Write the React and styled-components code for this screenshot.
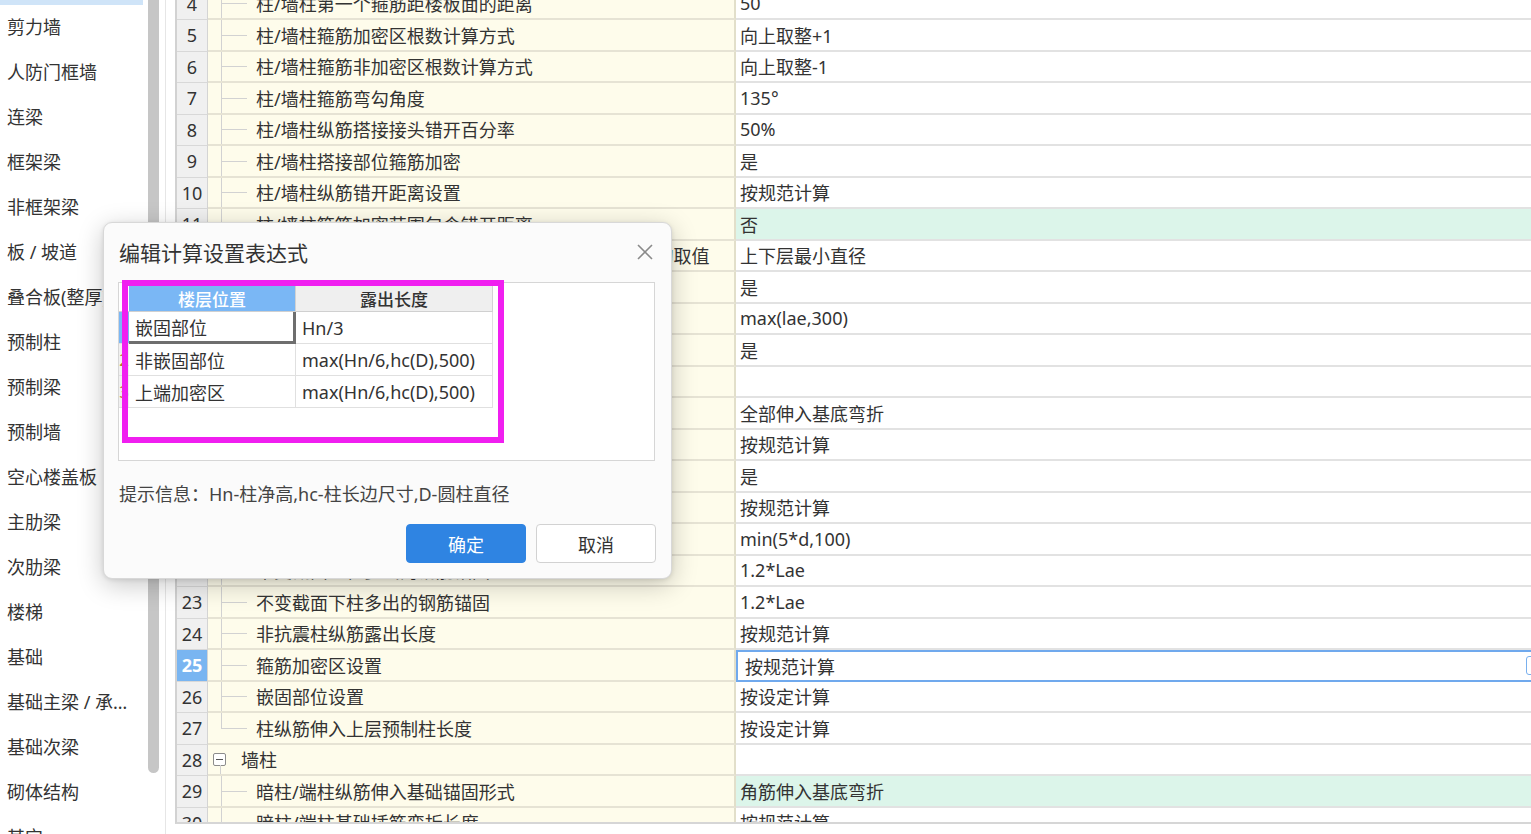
import React from "react";
import styled, { createGlobalStyle } from "styled-components";

const GlobalStyle = createGlobalStyle`
  html, body {
    margin: 0;
    padding: 0;
    background: #fff;
    overflow: hidden;
  }
  body {
    font-family: "Noto Sans", "Noto Sans CJK SC", sans-serif;
    color: #333;
  }
  * {
    box-sizing: border-box;
  }
`;

const navItems = [
  "柱",
  "剪力墙",
  "人防门框墙",
  "连梁",
  "框架梁",
  "非框架梁",
  "板 / 坡道",
  "叠合板(整厚)",
  "预制柱",
  "预制梁",
  "预制墙",
  "空心楼盖板",
  "主肋梁",
  "次肋梁",
  "楼梯",
  "基础",
  "基础主梁 / 承台梁",
  "基础次梁",
  "砌体结构",
  "其它",
];

// kind: child | last | group
const rows = [
  { n: 4, name: "柱/墙柱第一个箍筋距楼板面的距离", value: "50" },
  { n: 5, name: "柱/墙柱箍筋加密区根数计算方式", value: "向上取整+1" },
  { n: 6, name: "柱/墙柱箍筋非加密区根数计算方式", value: "向上取整-1" },
  { n: 7, name: "柱/墙柱箍筋弯勾角度", value: "135°" },
  { n: 8, name: "柱/墙柱纵筋搭接接头错开百分率", value: "50%" },
  { n: 9, name: "柱/墙柱搭接部位箍筋加密", value: "是" },
  { n: 10, name: "柱/墙柱纵筋错开距离设置", value: "按规范计算" },
  { n: 11, name: "柱/墙柱箍筋加密范围包含错开距离", value: "否", green: true },
  { n: 12, name: "绑扎搭接范围内的箍筋间距min(5d,100)中，纵筋d的取值", value: "上下层最小直径" },
  { n: 13, name: "柱/墙柱螺旋箍筋是否连续通过", value: "是" },
  { n: 14, name: "柱/墙柱圆形箍筋的搭接长度", value: "max(lae,300)" },
  { n: 15, name: "层间变截面钢筋自动判断", value: "是" },
  { n: 16, name: "柱/墙柱纵筋伸入基础弯折长度", value: "" },
  { n: 17, name: "柱纵筋伸入基础锚固形式", value: "全部伸入基底弯折" },
  { n: 18, name: "柱基础插筋弯折长度", value: "按规范计算" },
  { n: 19, name: "柱基础锚固区只计算外侧箍筋", value: "是" },
  { n: 20, name: "抗震柱纵筋露出长度", value: "按规范计算" },
  { n: 21, name: "纵筋搭接范围箍筋间距", value: "min(5*d,100)" },
  { n: 22, name: "不变截面上柱多出的钢筋锚固", value: "1.2*Lae" },
  { n: 23, name: "不变截面下柱多出的钢筋锚固", value: "1.2*Lae" },
  { n: 24, name: "非抗震柱纵筋露出长度", value: "按规范计算" },
  { n: 25, name: "箍筋加密区设置", value: "按规范计算", selected: true },
  { n: 26, name: "嵌固部位设置", value: "按设定计算" },
  { n: 27, name: "柱纵筋伸入上层预制柱长度", value: "按设定计算", kind: "last" },
  { n: 28, name: "墙柱", value: "", kind: "group" },
  { n: 29, name: "暗柱/端柱纵筋伸入基础锚固形式", value: "角筋伸入基底弯折", green: true },
  { n: 30, name: "暗柱/端柱基础插筋弯折长度", value: "按规范计算" },
];

const exprRows = [
  { n: 1, pos: "嵌固部位", len: "Hn/3", active: true },
  { n: 2, pos: "非嵌固部位", len: "max(Hn/6,hc(D),500)" },
  { n: 3, pos: "上端加密区", len: "max(Hn/6,hc(D),500)" },
];

const Page = styled.div`
  position: relative;
  display: flex;
  width: 1531px;
  height: 834px;
  overflow: hidden;
  background: #fff;
`;

/* ---------- left category list ---------- */

const Sidebar = styled.aside`
  display: flex;
  flex-shrink: 0;
  width: 166px;
  height: 100%;
  border-right: 1px solid #e6e6e6;
`;

const NavList = styled.ul`
  list-style: none;
  margin: -40px 0 0;
  padding: 0;
  width: 143px;
`;

const NavItem = styled.li`
  height: 45px;
  line-height: 45px;
  padding: 0 6px 0 7px;
  font-size: 18px;
  color: #333;
  white-space: nowrap;
  overflow: hidden;
  text-overflow: ellipsis;
  background: ${(p) => (p.$active ? "#cfe4f8" : "transparent")};
`;

const ScrollTrack = styled.div`
  flex: 1;
  padding-left: 5px;
`;

const ScrollThumb = styled.div`
  width: 11px;
  height: 783px;
  margin-top: -10px;
  border-radius: 6px;
  background: #c6c6c6;
`;

/* ---------- settings table ---------- */

const Main = styled.main`
  flex: 1;
  padding-left: 9px;
  min-width: 0;
`;

const TableFrame = styled.div`
  height: 824px;
  border-left: 2px solid #d2d2d2;
  border-bottom: 2px solid #d6d6d6;
  overflow: hidden;
`;

const TableBody = styled.div`
  margin-top: -11.5px;
`;

const Row = styled.div`
  display: grid;
  grid-template-columns: 31px 528px 820px;
  height: 31.5px;
`;

const NumCell = styled.div`
  display: flex;
  align-items: center;
  justify-content: center;
  font-size: 18px;
  background: ${(p) => (p.$selected ? "#79b5f1" : "#f0f0f0")};
  color: ${(p) => (p.$selected ? "#fff" : "#333")};
  font-weight: ${(p) => (p.$selected ? 700 : 400)};
  border-right: 1.5px solid #d4d4d4;
  border-bottom: 1.5px solid #d8d8d8;
`;

const TreeCell = styled.div`
  position: relative;
  display: flex;
  align-items: center;
  padding-left: ${(p) => (p.$group ? "5px" : "48px")};
  font-size: 18px;
  white-space: nowrap;
  overflow: hidden;
  background: #fefceb;
  border-right: 2px solid #e2dfca;
  border-bottom: 2px solid #e6e3d4;
`;

const TreeGuide = styled.span`
  position: absolute;
  inset: 0;
  pointer-events: none;

  &::before {
    content: "";
    position: absolute;
    left: 13px;
    top: 0;
    width: 1px;
    height: ${(p) => (p.$last ? "50%" : "calc(100% + 2px)")};
    background: #d2d2d2;
  }

  &::after {
    content: "";
    position: absolute;
    left: 13px;
    top: 50%;
    width: 26px;
    height: 1px;
    background: #d2d2d2;
  }
`;

const GroupLine = styled.span`
  position: absolute;
  left: 12px;
  top: calc(50% + 6px);
  bottom: -2px;
  width: 1px;
  background: #d2d2d2;
`;

const ToggleBox = styled.span`
  display: flex;
  align-items: center;
  justify-content: center;
  width: 13px;
  height: 13px;
  margin-right: 15px;
  border: 1px solid #8c8c8c;
  border-radius: 2px;
  background: #fff;

  &::before {
    content: "";
    width: 7px;
    height: 1px;
    background: #555;
  }
`;

const ValueCell = styled.div`
  display: flex;
  align-items: center;
  padding-left: ${(p) => (p.$selected ? "7px" : "4px")};
  font-size: 18px;
  white-space: nowrap;
  background: ${(p) => (p.$green ? "#dcf5ea" : "#fff")};
  border-bottom: 2px solid #e2e2e2;
  ${(p) =>
    p.$selected &&
    `
    border: 2px solid #70a9ed;
  `}
`;

const MoreButton = styled.span`
  display: flex;
  align-items: center;
  justify-content: center;
  width: 22px;
  height: 19px;
  margin-left: auto;
  margin-right: 6px;
  border: 1.5px solid #79b0ee;
  border-radius: 3px;
  background: #fff;
  color: #4a8ee0;
  font-size: 12px;
  line-height: 1;
`;

/* ---------- dialog ---------- */

const Dialog = styled.div`
  position: absolute;
  left: 103px;
  top: 222px;
  width: 569px;
  height: 357px;
  display: flex;
  flex-direction: column;
  background: #fbfbfb;
  border: 1px solid #d8d8d8;
  border-radius: 9px;
  box-shadow: 0 6px 26px rgba(0, 0, 0, 0.22), 0 1px 4px rgba(0, 0, 0, 0.1);
`;

const DialogHeader = styled.div`
  display: flex;
  align-items: center;
  justify-content: space-between;
  height: 58px;
  padding: 0 17px 0 15px;
`;

const DialogTitle = styled.h2`
  margin: 0;
  font-size: 21px;
  font-weight: 400;
  color: #333;
`;

const CloseButton = styled.button`
  display: flex;
  padding: 0;
  border: 0;
  background: none;
  color: #8a8a8a;
`;

const GridBox = styled.div`
  height: 179px;
  margin: 1px 16px 0 14px;
  padding-top: 3px;
  border: 1.5px solid #d6d6d6;
  background: #fff;
`;

const ExprGrid = styled.div`
  display: grid;
  grid-template-columns: 10px 167px 197px;
  grid-auto-rows: 32px;
  grid-template-rows: 26px;
`;

const Corner = styled.div`
  background: #fff;
  border-bottom: 1.5px solid #d0d0d0;
`;

const HeadCell = styled.div`
  display: flex;
  align-items: center;
  justify-content: center;
  font-size: 17px;
  font-weight: 500;
  color: ${(p) => (p.$selected ? "#fff" : "#333")};
  background: ${(p) => (p.$selected ? "#7ab7f5" : "#efefef")};
  border-right: 1.5px solid #d2d2d2;
  border-bottom: 1.5px solid #d0d0d0;
`;

const RowHead = styled.div`
  display: flex;
  align-items: center;
  justify-content: flex-end;
  overflow: hidden;
  font-size: 17px;
  color: #b07a2a;
  background: ${(p) => (p.$selected ? "#7ab7f5" : "#f0f0f0")};
  border-bottom: 1.5px solid #dedede;
`;

const DataCell = styled.div`
  display: flex;
  align-items: center;
  padding-left: 6px;
  font-size: 18px;
  color: #333;
  white-space: nowrap;
  border-right: ${(p) => (p.$active ? "3px solid #6e6e6e" : "1.5px solid #e0e0e0")};
  border-bottom: ${(p) => (p.$active ? "3px solid #6e6e6e" : "1.5px solid #e0e0e0")};
`;

const Hint = styled.p`
  margin: 21px 0 0 15px;
  font-size: 18px;
  line-height: 24px;
  color: #444;
`;

const Actions = styled.div`
  display: flex;
  justify-content: flex-end;
  gap: 10px;
  margin-top: auto;
  padding: 0 15px 15px;
`;

const Button = styled.button`
  width: 120px;
  height: 39px;
  border-radius: 4px;
  font-family: inherit;
  font-size: 18px;
  color: ${(p) => (p.$primary ? "#fff" : "#333")};
  background: ${(p) => (p.$primary ? "#2f84e2" : "#fff")};
  border: ${(p) => (p.$primary ? "1px solid #2f84e2" : "1.5px solid #d2d2d2")};
`;

const Highlight = styled.div`
  position: absolute;
  left: 18px;
  top: 57px;
  width: 382px;
  height: 163px;
  border: 6px solid #f01ff0;
  pointer-events: none;
`;

const CloseIcon = () => (
  <svg width="18" height="18" viewBox="0 0 18 18" fill="none">
    <path d="M2 2L16 16M16 2L2 16" stroke="currentColor" strokeWidth="1.6" />
  </svg>
);

const SettingsRow = ({ row }) => (
  <Row>
    <NumCell $selected={row.selected}>{row.n}</NumCell>
    {row.kind === "group" ? (
      <TreeCell $group>
        <ToggleBox />
        {row.name}
        <GroupLine />
      </TreeCell>
    ) : (
      <TreeCell>
        <TreeGuide $last={row.kind === "last"} />
        {row.name}
      </TreeCell>
    )}
    <ValueCell $green={row.green} $selected={row.selected}>
      {row.value}
      {row.selected && <MoreButton>···</MoreButton>}
    </ValueCell>
  </Row>
);

const ExpressionDialog = () => (
  <Dialog>
    <DialogHeader>
      <DialogTitle>编辑计算设置表达式</DialogTitle>
      <CloseButton>
        <CloseIcon />
      </CloseButton>
    </DialogHeader>
    <GridBox>
      <ExprGrid>
        <Corner />
        <HeadCell $selected>楼层位置</HeadCell>
        <HeadCell>露出长度</HeadCell>
        {exprRows.map((r) => (
          <React.Fragment key={r.n}>
            <RowHead $selected={r.active}>{r.active ? "" : r.n}</RowHead>
            <DataCell $active={r.active}>{r.pos}</DataCell>
            <DataCell>{r.len}</DataCell>
          </React.Fragment>
        ))}
      </ExprGrid>
    </GridBox>
    <Hint>提示信息：Hn-柱净高,hc-柱长边尺寸,D-圆柱直径</Hint>
    <Actions>
      <Button $primary>确定</Button>
      <Button>取消</Button>
    </Actions>
    <Highlight />
  </Dialog>
);

export default function App() {
  return (
    <>
      <GlobalStyle />
      <Page>
        <Sidebar>
          <NavList>
            {navItems.map((item, i) => (
              <NavItem key={item} $active={i === 0}>
                {item}
              </NavItem>
            ))}
          </NavList>
          <ScrollTrack>
            <ScrollThumb />
          </ScrollTrack>
        </Sidebar>
        <Main>
          <TableFrame>
            <TableBody>
              {rows.map((row) => (
                <SettingsRow key={row.n} row={row} />
              ))}
            </TableBody>
          </TableFrame>
        </Main>
        <ExpressionDialog />
      </Page>
    </>
  );
}
